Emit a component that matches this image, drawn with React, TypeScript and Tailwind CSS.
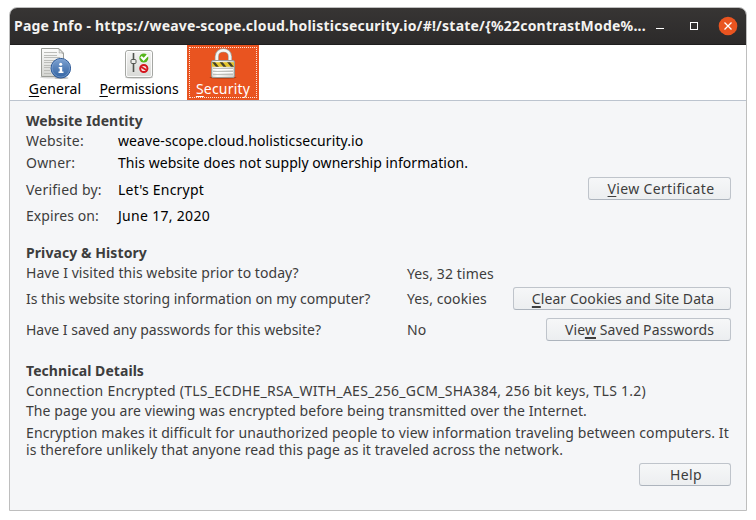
import type { ReactNode } from "react";

function Key({ children, bold = false }: { children: ReactNode; bold?: boolean }) {
  return (
    <span
      className={
        "underline underline-offset-2 [text-decoration-skip-ink:none] " +
        (bold ? "decoration-2" : "decoration-1")
      }
    >
      {children}
    </span>
  );
}

function GeneralIcon() {
  return (
    <svg width="32" height="32" viewBox="0 0 32 32" className="shrink-0">
      <defs>
        <linearGradient id="paper" x1="0" y1="0" x2="0" y2="1">
          <stop offset="0" stopColor="#fdfdfc" />
          <stop offset="1" stopColor="#d3d4d0" />
        </linearGradient>
        <linearGradient id="ball" x1="0" y1="0" x2="0" y2="1">
          <stop offset="0" stopColor="#7fa3d2" />
          <stop offset="0.5" stopColor="#5580b8" />
          <stop offset="1" stopColor="#3465a4" />
        </linearGradient>
      </defs>
      <ellipse cx="14" cy="30.2" rx="13" ry="1.4" fill="#000" opacity=".15" />
      <path d="M2.5 1.5H20L24.5 6V29.5H2.5Z" fill="url(#paper)" stroke="#9a9c97" />
      <path d="M19.5 1.5C21 3 20 6 20 6S23 5 24.5 7Z" fill="#fff" stroke="#a0a29d" strokeWidth=".8" />
      <path d="M5 5.500H18M5 8.500H18M5 10.500H21M5 13.500H21M5 15.500H20M5 18.500H12M5 20.500H11M5 23.500H11M5 26.500H12" stroke="#bcbdb9" strokeWidth="1" />
      <ellipse cx="22.5" cy="31" rx="7" ry="1" fill="#000" opacity=".25" />
      <circle cx="21.8" cy="21.2" r="9.8" fill="url(#ball)" stroke="#2f5b98" strokeWidth="1" />
      <circle cx="21.8" cy="21.2" r="8.8" fill="none" stroke="#86a7d3" strokeWidth=".6" />
      <circle cx="21.7" cy="17.3" r="1.5" fill="#fff" />
      <path d="M19.700 20H23.200V24.500H24.500V26H19.500V24.500H20.700V21.500H19.700Z" fill="#fff" />
    </svg>
  );
}

function PermissionsIcon() {
  return (
    <svg width="32" height="32" viewBox="0 0 32 32" className="shrink-0">
      <defs>
        <linearGradient id="panel" x1="0" y1="0" x2="0" y2="1">
          <stop offset="0" stopColor="#f4f4f3" />
          <stop offset="1" stopColor="#d8d9d6" />
        </linearGradient>
      </defs>
      <ellipse cx="16" cy="30.5" rx="14" ry="1.3" fill="#000" opacity=".18" />
      <rect x="2.5" y="3.5" width="27" height="27" rx="2.5" fill="url(#panel)" stroke="#a5a7a3" />
      <rect x="3.5" y="4.5" width="25" height="25" rx="1.5" fill="none" stroke="#fff" strokeOpacity=".85" />
      <path d="M10.5 6V25" stroke="#50534e" strokeWidth="1.6" />
      <rect x="8" y="12.5" width="5" height="4" rx="1" fill="#eeeeec" stroke="#555753" />
      <circle cx="20.8" cy="11" r="4.5" fill="#56b51c" />
      <path d="M18 9.8L20.6 12.4L24.8 8" fill="none" stroke="#fff" strokeWidth="2.2" />
      <circle cx="20.8" cy="21.5" r="3.6" fill="#f7e2e2" stroke="#d4141c" strokeWidth="2" />
      <path d="M18.3 20L23.3 23" stroke="#d4141c" strokeWidth="1.8" />
    </svg>
  );
}

function SecurityIcon() {
  return (
    <svg width="32" height="32" viewBox="0 0 32 32" className="shrink-0">
      <defs>
        <linearGradient id="metal" x1="0" y1="0" x2="1" y2="0">
          <stop offset="0" stopColor="#d5d5d2" />
          <stop offset=".25" stopColor="#f8f8f7" />
          <stop offset="1" stopColor="#d0d1cd" />
        </linearGradient>
        <clipPath id="band">
          <rect x="5" y="15.2" width="22" height="4.6" />
        </clipPath>
      </defs>
      <ellipse cx="16" cy="30.5" rx="13.5" ry="1.3" fill="#5a1d08" opacity=".4" />
      <path d="M9.8 14V9.5C9.8 1.3 23 1.3 23 9.5V14" fill="none" stroke="#a4a59f" strokeWidth="4" />
      <path d="M9.8 14V9.5C9.8 1.3 23 1.3 23 9.5V14" fill="none" stroke="#f5f5f3" strokeWidth="2.6" />
      <rect x="4.5" y="13.5" width="23" height="17" rx="1.5" fill="url(#metal)" stroke="#999a95" />
      <g clipPath="url(#band)">
        <rect x="4" y="15" width="24" height="5" fill="#e6c62d" />
        <path d="M5 15H8L12 20H9ZM12.5 15H15.5L19.5 20H16.5ZM20 15H23L27 20H24Z" fill="#45432a" />
      </g>
      <path d="M6 21.5H26M6 24.5H26M6 27.5H26" stroke="#b9bab6" strokeWidth=".9" />
      <path d="M6 22.5H26M6 25.5H26" stroke="#fff" strokeWidth=".9" />
    </svg>
  );
}

function Button({ className, children }: { className: string; children: ReactNode }) {
  return (
    <button
      className={
        "flex h-[23px] shrink-0 justify-center rounded-[3px] border border-[#bfc4cb] border-b-[#adb4bd] bg-linear-to-b from-[#f6f7f8] to-[#eceef0] pt-px leading-5 whitespace-nowrap " +
        className
      }
    >
      {children}
    </button>
  );
}

export default function App() {
  return (
    <div className="h-[520px] w-[756px] bg-white pt-[7px] pl-[9px] font-['Noto_Sans',sans-serif] text-[14px] leading-5 whitespace-nowrap text-[#3d3d3d]">
      <div className="flex h-[504px] w-[738px] flex-col overflow-hidden rounded-t-[8px] border border-[#bebebe] bg-[#f5f6f8]">
        <header className="flex h-[37px] shrink-0 items-center border-b border-[#1f1e1e] bg-linear-to-b from-[#373534] to-[#2c2a2a] pl-1 text-[#f4f3f1]">
          <div className="w-[642px] font-bold tracking-[0.22px]">
            {"Page Info - https://weave-scope.cloud.holisticsecurity.io/#!/state/{%22contrastMode%..."}
          </div>
          <svg width="88" height="36" viewBox="0 0 88 36" className="shrink-0">
            <path d="M0 20.5H8" stroke="#fff" />
            <rect x="34.5" y="14.5" width="7" height="7" fill="none" stroke="#fff" />
            <circle cx="72" cy="18" r="9.3" fill="#e95420" />
            <path d="M68.5 14.5L75.5 21.5M75.5 14.5L68.5 21.5" stroke="#fff" strokeWidth="1.3" />
          </svg>
        </header>

        <nav className="flex h-14 shrink-0 border-b border-[#bcc4cf] bg-white pl-[9px] text-black">
          <div className="flex w-[72px] flex-col items-center pt-[2px]">
            <GeneralIcon />
            <span className="tracking-[0.1px]"><Key>G</Key>eneral</span>
          </div>
          <div className="flex w-24 flex-col items-center pt-[2px]">
            <PermissionsIcon />
            <span className="tracking-[-0.05px]"><Key>P</Key>ermissions</span>
          </div>
          <div className="w-[72px] bg-[#e95420] p-[2px] text-white">
            <div className="flex h-[51px] flex-col items-center outline-1 outline-dotted outline-[#fbe3da] -outline-offset-1">
              <SecurityIcon />
              <span className="tracking-[0.2px]"><Key>S</Key>ecurity</span>
            </div>
          </div>
        </nav>

        <main className="flex flex-col pt-2.5 pr-[15px] pl-4">
          <section className="flex flex-col">
            <h2 className="font-bold tracking-[0.06px]">Website Identity</h2>
            <div className="flex h-[22px]">
              <span className="w-[92px] tracking-[0.2px]">Website:</span>
              <span className="tracking-[0.105px] text-black">weave-scope.cloud.holisticsecurity.io</span>
            </div>
            <div className="flex h-6">
              <span className="w-[92px] tracking-[0.2px]">Owner:</span>
              <span className="tracking-[0.05px] text-black">This website does not supply ownership information.</span>
            </div>
            <div className="flex h-[29px]">
              <span className="w-[92px] pt-[3px] tracking-[0.22px]">Verified by:</span>
              <span className="grow pt-[3px] tracking-[0.2px] text-black">Let's Encrypt</span>
              <Button className="w-[143px] pl-[3px] tracking-[0.34px]">
                <span><Key>V</Key>iew Certificate</span>
              </Button>
            </div>
            <div className="flex h-5">
              <span className="w-[92px] tracking-[0.08px]">Expires on:</span>
              <span className="tracking-[0.3px] text-black">June 17, 2020</span>
            </div>
          </section>

          <section className="mt-[17px] flex flex-col">
            <h2 className="font-bold tracking-[0.08px]">Privacy &amp; History</h2>
            <div className="flex h-6">
              <span className="w-[381px] tracking-[0.06px]">Have I visited this website prior to today?</span>
              <span className="pt-px tracking-[0.12px]">Yes, 32 times</span>
            </div>
            <div className="flex h-[31px]">
              <span className="w-[381px] pt-[2px]">Is this website storing information on my computer?</span>
              <span className="grow pt-[2px] tracking-[0.1px]">Yes, cookies</span>
              <Button className="w-[218px] pl-[2px] tracking-[0.07px]">
                <span><Key bold>C</Key>lear Cookies and Site Data</span>
              </Button>
            </div>
            <div className="flex h-[23px]">
              <span className="w-[381px] pt-[2px] tracking-[-0.01px]">Have I saved any passwords for this website?</span>
              <span className="grow pt-[2px] tracking-[0.1px]">No</span>
              <Button className="w-[185px] pl-[2px] tracking-[0.1px]">
                <span>Vie<Key bold>w</Key> Saved Passwords</span>
              </Button>
            </div>
          </section>

          <section className="mt-5 flex flex-col">
            <h2 className="font-bold tracking-[0.06px]">Technical Details</h2>
            <p className="tracking-[0.249px]">Connection Encrypted (TLS_ECDHE_RSA_WITH_AES_256_GCM_SHA384, 256 bit keys, TLS 1.2)</p>
            <p className="tracking-[0.08px]">The page you are viewing was encrypted before being transmitted over the Internet.</p>
            <p className="mt-[3px] leading-[17px] tracking-[0.103px]">
              Encryption makes it difficult for unauthorized people to view information traveling between computers. It
              <br />
              <span className="tracking-[0.078px]">is therefore unlikely that anyone read this page as it traveled across the network.</span>
            </p>
          </section>

          <div className="mt-[5px] flex justify-end">
            <Button className="w-[92px] pl-[2px] tracking-[0.4px]">Help</Button>
          </div>
        </main>
      </div>
    </div>
  );
}
